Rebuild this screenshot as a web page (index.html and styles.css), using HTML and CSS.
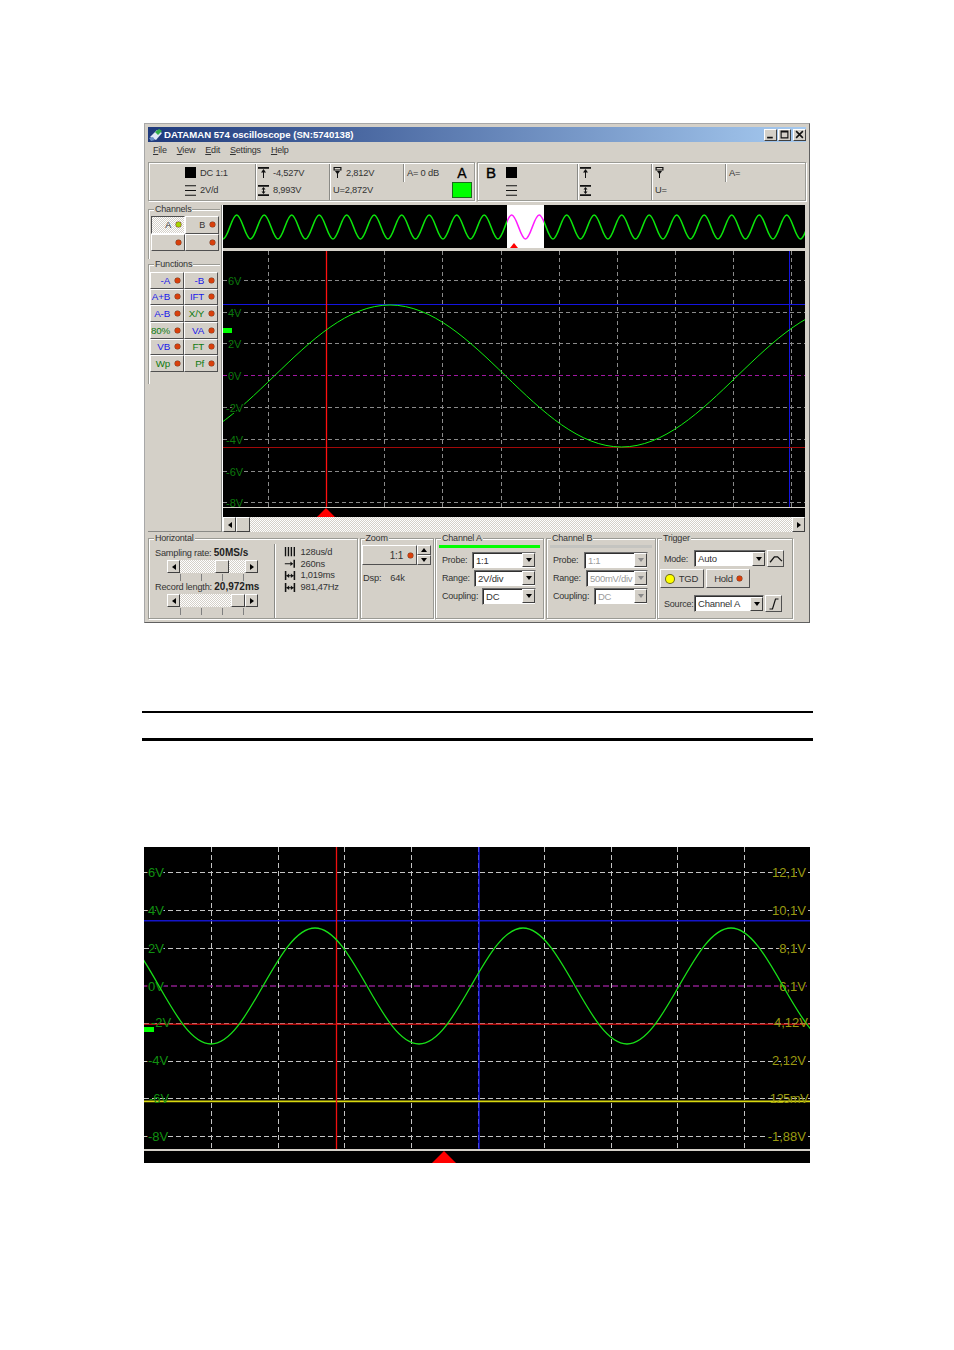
FILE: index.html
```html
<!DOCTYPE html>
<html lang="en">
<head>
<meta charset="utf-8">
<title>DATAMAN 574 oscilloscope</title>
<link rel="stylesheet" href="styles.css">
</head>
<body>
<svg class="sprite" aria-hidden="true">
  <symbol id="i-up" viewBox="0 0 11 11"><path d="M0 0h11v1.8H0z"/><path d="M5 3h1v8H5z"/><path d="M5.5 2L8 5.5H3z"/></symbol>
  <symbol id="i-both" viewBox="0 0 11 11"><path d="M0 0h11v1.8H0zM0 9.2h11V11H0z"/><path d="M5 3h1v5H5z"/><path d="M5.5 2L7.5 4.5h-4zM5.5 9L7.5 6.5h-4z"/></symbol>
  <symbol id="i-pin" viewBox="0 0 11 11"><path fill-rule="evenodd" d="M1.5 0h8v3.5h-8zM2.7 1.1v1.3h5.6V1.1z"/><path d="M5 6h1v5H5z"/><path d="M5.5 7.5L3 4h5z"/></symbol>
  <symbol id="i-lines" viewBox="0 0 11 11"><path d="M0 .3h11v1H0zM0 5h11v1H0zM0 9.7h11v1H0z"/></symbol>
  <symbol id="i-bars" viewBox="0 0 12 11"><path d="M0 0h1.6v11H0zM3.4 0H5v11H3.4zM6.8 0h1.6v11H6.8zM10.2 0h1.6v11h-1.6z"/></symbol>
  <symbol id="i-right" viewBox="0 0 12 11"><path d="M0 5h9v1H0z"/><path d="M9.5 5.5L6.5 3v5zM10 1h1.8v9H10z"/></symbol>
  <symbol id="i-span" viewBox="0 0 12 11"><path d="M0 0h1.8v11H0zM10.2 0H12v11h-1.8zM2 5h8v1H2z"/><path d="M2 5.5L5 3v5zM10 5.5L7 3v5z"/></symbol>
</svg>

<main class="window">
  <header class="titlebar">
    <svg class="appicon" viewBox="0 0 14 13"><path class="ico-w" d="M1 9l7-7 5 3-6 7z"/><path class="ico-g" d="M6 4l4-3 3 2-4 4z"/><path class="ico-b" d="M0 10l4-1 2 3-4 1z"/></svg>
    <span class="title-text">DATAMAN 574 oscilloscope (SN:5740138)</span>
    <div class="capbtns">
      <span class="capbtn"><svg viewBox="0 0 8 8"><path d="M1 6h5v1.5H1z"/></svg></span>
      <span class="capbtn"><svg viewBox="0 0 8 8"><path d="M.5.5h7v7h-7zM1.5 2.2v4.3h5V2.2z" fill-rule="evenodd"/></svg></span>
      <span class="capbtn capclose"><svg viewBox="0 0 8 8"><path d="M1 1l6 6M7 1L1 7" class="capx"/></svg></span>
    </div>
  </header>

  <nav class="menu">
    <span><u>F</u>ile</span><span><u>V</u>iew</span><span><u>E</u>dit</span><span><u>S</u>ettings</span><span><u>H</u>elp</span>
  </nav>

  <section class="toolbars">
    <div class="panel panel-a">
      <div class="pcol c-head">
        <div class="rd"><i class="sq"></i><span>DC 1:1</span></div>
        <div class="rd"><svg class="ic"><use href="#i-lines"/></svg><span>2V/d</span></div>
      </div>
      <div class="pcol div">
        <div class="rd"><svg class="ic"><use href="#i-up"/></svg><span>-4,527V</span></div>
        <div class="rd"><svg class="ic"><use href="#i-both"/></svg><span>8,993V</span></div>
      </div>
      <div class="pcol div">
        <div class="rd"><svg class="ic"><use href="#i-pin"/></svg><span class="sp3">2,812V</span></div>
        <div class="rd"><span>U=2,872V</span></div>
      </div>
      <div class="pcol c-db">
        <div class="rd div-short"><span>A= 0 dB</span></div>
        <div class="ch-badge"><b>A</b><i class="swatch"></i></div>
      </div>
    </div>
    <div class="panel panel-b">
      <div class="pcol c-headb">
        <div class="rd"><b class="big">B</b><i class="sq"></i></div>
        <div class="rd rd-ind"><svg class="ic"><use href="#i-lines"/></svg></div>
      </div>
      <div class="pcol div c-b2">
        <div class="rd"><svg class="ic"><use href="#i-up"/></svg></div>
        <div class="rd"><svg class="ic"><use href="#i-both"/></svg></div>
      </div>
      <div class="pcol div c-b3">
        <div class="rd"><svg class="ic"><use href="#i-pin"/></svg></div>
        <div class="rd"><span>U=</span></div>
      </div>
      <div class="pcol c-db">
        <div class="rd div-short"><span>A=</span></div>
      </div>
    </div>
  </section>

  <section class="work">
    <aside class="side">
      <fieldset class="grp side-grp">
        <legend>Channels</legend>
        <div class="btngrid">
          <button class="bt checked">A<i class="led on"></i></button>
          <button class="bt">B<i class="led"></i></button>
          <button class="bt"><i class="led"></i></button>
          <button class="bt"><i class="led"></i></button>
        </div>
      </fieldset>
      <fieldset class="grp side-grp fn-grp">
        <legend>Functions</legend>
        <div class="btngrid fn">
          <button class="bt blue">-A<i class="led"></i></button>
          <button class="bt blue">-B<i class="led"></i></button>
          <button class="bt blue">A+B<i class="led"></i></button>
          <button class="bt blue">IFT<i class="led"></i></button>
          <button class="bt blue">A-B<i class="led"></i></button>
          <button class="bt green">X/Y<i class="led"></i></button>
          <button class="bt green">80%<i class="led"></i></button>
          <button class="bt blue">VA<i class="led"></i></button>
          <button class="bt blue">VB<i class="led"></i></button>
          <button class="bt green">FT<i class="led"></i></button>
          <button class="bt green">Wp<i class="led"></i></button>
          <button class="bt green">Pf<i class="led"></i></button>
        </div>
      </fieldset>
    </aside>

    <div class="scopes">
      <svg class="mini" viewBox="223 205 582 43">
        <defs>
          <path id="minwave" d="M209.2 215c5 0 8.75 24 13.75 24c5 0 8.75-24 13.75-24c5 0 8.75 24 13.75 24c5 0 8.75-24 13.75-24c5 0 8.75 24 13.75 24c5 0 8.75-24 13.75-24c5 0 8.75 24 13.75 24c5 0 8.75-24 13.75-24c5 0 8.75 24 13.75 24c5 0 8.75-24 13.75-24c5 0 8.75 24 13.75 24c5 0 8.75-24 13.75-24c5 0 8.75 24 13.75 24c5 0 8.75-24 13.75-24c5 0 8.75 24 13.75 24c5 0 8.75-24 13.75-24c5 0 8.75 24 13.75 24c5 0 8.75-24 13.75-24c5 0 8.75 24 13.75 24c5 0 8.75-24 13.75-24c5 0 8.75 24 13.75 24c5 0 8.75-24 13.75-24c5 0 8.75 24 13.75 24c5 0 8.75-24 13.75-24c5 0 8.75 24 13.75 24c5 0 8.75-24 13.75-24c5 0 8.75 24 13.75 24c5 0 8.75-24 13.75-24c5 0 8.75 24 13.75 24c5 0 8.75-24 13.75-24c5 0 8.75 24 13.75 24c5 0 8.75-24 13.75-24c5 0 8.75 24 13.75 24c5 0 8.75-24 13.75-24c5 0 8.75 24 13.75 24c5 0 8.75-24 13.75-24c5 0 8.75 24 13.75 24c5 0 8.75-24 13.75-24c5 0 8.75 24 13.75 24c5 0 8.75-24 13.75-24c5 0 8.75 24 13.75 24c5 0 8.75-24 13.75-24c5 0 8.75 24 13.75 24c5 0 8.75-24 13.75-24"/>
        </defs>
        <rect class="blk" x="223" y="205" width="582" height="43"/>
        <use href="#minwave" class="w-mini"/>
        <rect class="wht" x="507" y="205" width="37" height="43"/>
        <svg x="507" y="205" width="37" height="43" viewBox="507 205 37 43"><use href="#minwave" class="w-mag"/></svg>
        <path class="redf" d="M514 243l4 5h-8z"/>
      </svg>

      <svg class="main-scope" viewBox="223 251 582 266" role="img">
        <rect class="blk" x="223" y="251" width="582" height="266"/>
        <path class="grid dim" d="M223 280.5H805M223 312.5H805M223 343.5H805M223 407.5H805M223 439.5H805M223 471.5H805M223 502.5H805"/>
        <path class="grid dim" d="M268.5 251V507M384.5 251V507M442.5 251V507M501.5 251V507M559.5 251V507M617.5 251V507M675.5 251V507M733.5 251V507M791.5 251V507"/>
        <path class="purple" d="M223 375.5H805"/>
        <path class="hblue" d="M223 304.5H805M789.5 251V507"/>
        <path class="hred" d="M223 447.5H805"/>
        <path class="vred" d="M326.5 251V507"/>
        <path class="wave" d="M-73 305c84.3 0 147.2 142 231.5 142c84.3 0 147.2-142 231.5-142c84.3 0 147.2 142 231.5 142c84.3 0 147.2-142 231.5-142"/>
        <g class="vl">
          <text x="228" y="284.5">6V</text><text x="228" y="316.5">4V</text><text x="228" y="347.5">2V</text><text x="228" y="379.5">0V</text>
          <text x="226" y="411.5">-2V</text><text x="226" y="443.5">-4V</text><text x="226" y="475.5">-6V</text><text x="226" y="506.5">-8V</text>
        </g>
        <rect class="lime" x="223" y="328" width="9" height="5"/>
        <rect class="blk" x="223" y="508" width="582" height="9"/>
        <path class="sep" d="M223 507.5H805"/>
        <path class="redf" d="M326 508l9 9h-18z"/>
      </svg>

      <div class="hscroll">
        <span class="sb sb-l"></span><span class="thumb"></span><span class="track"></span><span class="sb sb-r"></span>
      </div>
    </div>
  </section>

  <section class="bottom">
    <fieldset class="grp g-h">
      <legend>Horizontal</legend>
      <div class="h-inner">
        <div class="h-left">
          <div class="h-lab">Sampling rate: <b>50MS/s</b></div>
          <div class="slider"><span class="sb sb-l"></span><span class="strack"><span class="thumb t1"></span></span><span class="sb sb-r"></span></div>
          <div class="ticks"><i></i><i></i><i></i><i></i></div>
          <div class="h-lab">Record length: <b>20,972ms</b></div>
          <div class="slider"><span class="sb sb-l"></span><span class="strack"><span class="thumb t2"></span></span><span class="sb sb-r"></span></div>
          <div class="ticks"><i></i><i></i><i></i><i></i></div>
        </div>
        <div class="h-right">
          <div class="m"><svg class="ic2"><use href="#i-bars"/></svg><span>128us/d</span></div>
          <div class="m"><svg class="ic2"><use href="#i-right"/></svg><span>260ns</span></div>
          <div class="m"><svg class="ic2"><use href="#i-span"/></svg><span>1,019ms</span></div>
          <div class="m"><svg class="ic2"><use href="#i-span"/></svg><span>981,47Hz</span></div>
        </div>
      </div>
    </fieldset>

    <fieldset class="grp g-z">
      <legend>Zoom</legend>
      <div class="z-row">
        <button class="bt z-btn">1:1<i class="led"></i></button>
        <div class="spin"><span class="bt s-up"></span><span class="bt s-dn"></span></div>
      </div>
      <div class="dsp"><span>Dsp:</span><span>64k</span></div>
    </fieldset>

    <fieldset class="grp g-c">
      <legend>Channel A</legend>
      <div class="cbar"></div>
      <div class="crow"><span>Probe:</span><div class="combo w-p"><span>1:1</span><i class="arr"></i></div></div>
      <div class="crow"><span>Range:</span><div class="combo w-r"><span>2V/div</span><i class="arr"></i></div></div>
      <div class="crow"><span>Coupling:</span><div class="combo w-c"><span>DC</span><i class="arr"></i></div></div>
    </fieldset>

    <fieldset class="grp g-c g-cb">
      <legend>Channel B</legend>
      <div class="cbar off"></div>
      <div class="crow"><span>Probe:</span><div class="combo w-p dis"><span>1:1</span><i class="arr"></i></div></div>
      <div class="crow"><span>Range:</span><div class="combo w-r dis"><span>500mV/div</span><i class="arr"></i></div></div>
      <div class="crow"><span>Coupling:</span><div class="combo w-c dis"><span>DC</span><i class="arr"></i></div></div>
    </fieldset>

    <fieldset class="grp g-t">
      <legend>Trigger</legend>
      <div class="t-row">
        <span class="t-lab">Mode:</span>
        <div class="combo w-t"><span>Auto</span><i class="arr"></i></div>
        <button class="bt t-ic"><svg viewBox="0 0 13 10"><path class="tr-line" d="M1 8l4-5h3l4 4"/></svg></button>
      </div>
      <div class="t-btns">
        <button class="bt tgd"><i class="led y"></i>TGD</button>
        <button class="bt hold">Hold<i class="led"></i></button>
      </div>
      <div class="t-row src">
        <span class="t-lab">Source:</span>
        <div class="combo w-t2"><span>Channel A</span><i class="arr"></i></div>
        <button class="bt t-ic"><svg viewBox="0 0 13 12"><path class="tr-line" d="M2 11h3l3-10h3"/></svg></button>
      </div>
    </fieldset>
  </section>
</main>

<hr class="rule r1">
<hr class="rule r2">

<svg class="scope2" viewBox="144 847 666 316" role="img">
  <rect class="blk" x="144" y="847" width="666" height="316"/>
  <path class="grid bright" d="M144 872.5H810M144 910.5H810M144 948.5H810M144 1023.5H810M144 1061.5H810M144 1098.5H810M144 1136.5H810"/>
  <path class="grid bright" d="M211.5 847V1149M278.5 847V1149M344.5 847V1149M411.5 847V1149M478.5 847V1149M544.5 847V1149M611.5 847V1149M677.5 847V1149M744.5 847V1149"/>
  <path class="purple2" d="M144 986H810"/>
  <g class="vl2">
    <text x="148" y="877">6V</text><text x="148" y="915">4V</text><text x="148" y="953">2V</text><text x="148" y="991">0V</text>
    <text x="148" y="1065">-4V</text><text x="148" y="1141">-8V</text>
  </g>
  <g class="vr2">
    <text x="806" y="877">12,1V</text><text x="806" y="915">10,1V</text><text x="806" y="953">8,1V</text><text x="806" y="991">6,1V</text>
    <text x="806" y="1065">2,12V</text><text x="806" y="1141">-1,88V</text>
  </g>
  <path class="b2" d="M144 920.7H810"/>
  <path class="v-b2" d="M479 847V1149"/>
  <path class="r2l" d="M144 1024.3H810"/>
  <path class="y2" d="M144 1101.3H810"/>
  <path class="v-r2" d="M336.5 847V1149"/>
  <path class="wave2" d="M107 928c37.9 0 66.1 116 104 116c37.9 0 66.1-116 104-116c37.9 0 66.1 116 104 116c37.9 0 66.1-116 104-116c37.9 0 66.1 116 104 116c37.9 0 66.1-116 104-116c37.9 0 66.1 116 104 116c37.9 0 66.1-116 104-116"/>
  <g class="vl2 over">
    <text x="151" y="1027">-2V</text><text x="149" y="1103">-6V</text>
  </g>
  <g class="vr2 over">
    <text x="808" y="1027">4,12V</text><text x="808" y="1103" class="tight">125mV</text>
  </g>
  <rect class="lime" x="144" y="1027" width="10" height="5"/>
  <rect class="sep2" x="144" y="1149" width="666" height="2"/>
  <path class="redf" d="M444 1151l12 12h-24z"/>
</svg>
</body>
</html>
```

FILE: styles.css
```css
* { box-sizing: border-box; }
html, body { margin: 0; background: #fff; }
body {
  padding: 123px 0 0 144px;
  width: 954px;
  height: 1350px;
  overflow: hidden;
  font-family: "Liberation Sans", Arial, sans-serif;
  font-size: 9px;
  letter-spacing: -0.2px;
  color: #333;
}
.sprite { display: none; }

/* window */
.window {
  width: 666px;
  height: 500px;
  padding: 3px 3px 0;
  background: #d4d0c8;
  border: 1px solid #a8a8a8;
  border-right-color: #606060;
  border-bottom-color: #606060;
}
.titlebar {
  height: 15px;
  display: flex;
  align-items: center;
  background: linear-gradient(90deg, #1f3a7c 0%, #a6caf0 100%);
  padding: 0 0 0 1px;
}
.appicon { width: 14px; height: 13px; flex: none; }
.ico-w { fill: #dfe8f5; }
.ico-g { fill: #34b04a; }
.ico-b { fill: #6a90c8; }
.title-text {
  margin-left: 1px;
  font-weight: 700;
  font-size: 9.6px;
  letter-spacing: 0;
  color: #fff;
  white-space: nowrap;
}
.capbtns { margin-left: auto; display: flex; gap: 1px; }
.capbtn {
  width: 13px;
  height: 12px;
  background: #d4d0c8;
  border: 1px solid;
  border-color: #fff #404040 #404040 #fff;
  display: flex;
  align-items: center;
  justify-content: center;
}
.capbtn svg { width: 9px; height: 9px; fill: #111; }
.capclose { margin-left: 1px; }
.capx { stroke: #111; stroke-width: 1.4; fill: none; }

.menu {
  height: 16px;
  display: flex;
  align-items: center;
  gap: 10px;
  padding-left: 5px;
}
.menu span { white-space: nowrap; }

/* top readouts */
.toolbars { display: flex; gap: 2px; height: 39px; margin-top: 4px; }
.panel {
  display: flex;
  border: 1px solid #9a9a94;
  box-shadow: inset 1px 1px #fff, 1px 1px #fff;
  padding-top: 1px;
}
.panel-a { width: 327px; }
.panel-b { width: 329px; }
.pcol { display: flex; flex-direction: column; }
.pcol.div { border-left: 1px solid #8a8a86; box-shadow: inset 1px 0 #fff; width: 74px; padding-left: 2px; }
.c-head { width: 106px; padding-left: 36px; }
.c-db { flex: 1; display: flex; flex-direction: row; }
.rd { height: 17.5px; display: flex; align-items: center; white-space: nowrap; font-size: 9.3px; }
.rd > span { margin-left: 4px; }
.pcol.div .rd > span:only-child { margin-left: 1px; }
.rd > .sp3 { margin-left: 3px; }
.sq { width: 11px; height: 11px; background: #000; display: block; flex: none; }
.ic { width: 11px; height: 11px; flex: none; fill: #111; }
.div-short { border-left: 1px solid #8a8a86; box-shadow: inset 1px 0 #fff; padding-left: 3px; }
.rd.div-short > span { margin-left: 0; }
.ch-badge { margin: 1px 2px 0 auto; display: flex; flex-direction: column; align-items: center; width: 20px; }
.ch-badge b { font-size: 14px; line-height: 17px; font-weight: 400; color: #000; letter-spacing: 0; -webkit-text-stroke: .3px #000; }
.swatch { width: 20px; height: 16px; background: #00ff00; border: 1px solid #1d6a1d; display: block; }
.c-headb { width: 99px; padding-left: 8px; }
.big { font-size: 15px; line-height: 17px; font-weight: 400; letter-spacing: 0; color: #000; width: 20px; -webkit-text-stroke: .4px #000; }
.rd-ind { padding-left: 20px; }

/* main area */
.work { display: flex; height: 327px; margin-top: 4px; }
.side {
  width: 75px;
  flex: none;
  border-right: 1px solid #fff;
  box-shadow: inset -1px 0 #8a8a86;
  border-bottom: 1px solid #8a8a86;
  padding-right: 3px;
}
.grp {
  margin: 0;
  padding: 0;
  min-width: 0;
  border: 1px solid #9a9a94;
  box-shadow: inset 1px 1px #fff, 1px 1px #fff;
}
.grp legend {
  margin-left: 5px;
  padding: 0 1px;
  font-size: 9px;
  line-height: 11px;
  height: 11px;
  background: #d4d0c8;
}
.side-grp { width: 72px; border-right: 0; border-bottom: 0; box-shadow: inset 1px 1px #fff; height: 55px; margin-top: -1px; }
.side-grp .btngrid { margin-top: 1px; grid-auto-rows: 17.5px; }
.fn-grp { margin-top: 0; height: 125px; }
.btngrid { display: grid; grid-template-columns: 34px 34px; padding-left: 2px; }
.side-grp .btngrid.fn { grid-auto-rows: 16.67px; padding-left: 1px; margin-top: 2px; }
.bt {
  margin: 0;
  padding: 0 3px 0 0;
  font: inherit;
  letter-spacing: inherit;
  color: #333;
  background: #d4d0c8;
  border: 1px solid;
  border-color: #fff #505050 #505050 #fff;
  display: flex;
  align-items: center;
  justify-content: flex-end;
  gap: 5px;
}
.bt.blue { color: #1a1ae8; font-size: 9.8px; }
.bt.green { color: #0f7a0f; font-size: 9.8px; }
.checked {
  background: repeating-conic-gradient(#fff 0 25%, #d4d0c8 0 50%) 0 0 / 2px 2px;
  border-color: #505050 #fff #fff #505050;
}
.led {
  width: 5px;
  height: 5px;
  border-radius: 50%;
  background: #d8400c;
  box-shadow: 0 0 0 .5px #7a3a20;
  flex: none;
  display: block;
}
.led.on { background: #a4d400; }
.led.y { width: 8px; height: 8px; background: #ffff00; box-shadow: 0 0 0 1px #6a6a10; }

.scopes { flex: 1; display: flex; flex-direction: column; }
.mini { width: 582px; height: 43px; display: block; flex: none; }
.main-scope {
  width: 582px;
  height: 266px;
  display: block;
  flex: none;
  margin-top: 3px;
}
.blk { fill: #000; }
.wht { fill: #fff; }
.redf { fill: #f00; }
.lime { fill: #00ff00; }
.w-mini { fill: none; stroke: #0be40b; stroke-width: 1.6; }
.w-mag { fill: none; stroke: #ff1cff; stroke-width: 1.6; }
.grid { fill: none; stroke-width: 1; shape-rendering: crispEdges; }
.grid.dim { stroke: #8a8a8a; stroke-dasharray: 4 3; }
.grid.bright { stroke: #c4c4c4; stroke-dasharray: 5 3; }
.purple { stroke: #a018a0; stroke-width: 1; stroke-dasharray: 4 3; shape-rendering: crispEdges; }
.hblue { stroke: #1414e0; stroke-width: 1; fill: none; shape-rendering: crispEdges; }
.hred { stroke: #a00808; stroke-width: 1; shape-rendering: crispEdges; }
.vred { stroke: #ff1010; stroke-width: 1.3; }
.wave { fill: none; stroke: #10f010; stroke-width: 1; }
.vl text { font-size: 11px; letter-spacing: 0; fill: #0c7a0c; stroke: #000; stroke-width: 2px; paint-order: stroke; }
.sep { stroke: #d4d0c8; stroke-width: 1; shape-rendering: crispEdges; }

.hscroll { display: flex; height: 15px; align-items: stretch; width: 582px; }
.track, .strack {
  flex: 1;
  background: repeating-conic-gradient(#fff 0 25%, #d4d0c8 0 50%) 0 0 / 2px 2px;
}
.sb, .thumb {
  width: 13px;
  flex: none;
  background: #d4d0c8;
  border: 1px solid;
  border-color: #fff #404040 #404040 #fff;
  display: flex;
  align-items: center;
  justify-content: center;
}
.thumb { width: 14px; }
.sb::after { content: ""; width: 0; height: 0; border-style: solid; border-color: transparent; }
.sb-l::after { border-width: 3.5px 4px 3.5px 0; border-right-color: #000; }
.sb-r::after { border-width: 3.5px 0 3.5px 4px; border-left-color: #000; }

/* bottom groups */
.bottom { display: flex; height: 89px; padding-top: 1px; }
.g-h { width: 210px; height: 86px; margin-right: 2px; }
.g-z { width: 74px; height: 86px; margin-right: 1px; }
.g-c { width: 109px; height: 86px; margin-right: 2px; padding: 1px 3px 0; }
.g-cb { width: 110px; margin-right: 1px; }
.g-t { width: 136px; height: 86px; padding: 6px 5px 0 2px; }
.g-z legend { margin-left: 3.5px; }
.g-c legend { margin-left: 2px; }
.g-cb legend { margin-left: 1px; }
.g-t legend { margin-left: 2px; }

.h-inner { display: flex; height: 74px; }
.h-left { width: 125px; padding-left: 6px; padding-top: 3px; }
.h-lab { height: 11px; line-height: 11px; white-space: nowrap; font-size: 9.2px; }
.h-lab b { font-size: 10px; letter-spacing: 0; color: #222; }
.slider { display: flex; width: 91px; height: 13px; margin: 2px 0 0 12px; }
.strack { display: flex; }
.slider .thumb.t1 { margin-left: 35px; }
.slider .thumb.t2 { margin-left: 51px; }
.ticks { display: flex; gap: 20px; height: 7px; margin: 1px 0 0 25px; }
.ticks i { width: 1px; background: #808080; display: block; }
.h-right { flex: 1; border-left: 1px solid #8a8a86; box-shadow: inset 1px 0 #fff; padding: 2px 0 0 9px; }
.m { height: 11.8px; display: flex; align-items: center; gap: 4.5px; font-size: 9.3px; }
.ic2 { width: 12px; height: 9.5px; fill: #111; flex: none; }

.z-row { display: flex; padding: 1px 0 0 1px; }
.z-btn { width: 55px; height: 20px; padding-right: 3px; font-size: 10px; gap: 5px; }
.spin { width: 14px; height: 20px; display: flex; flex-direction: column; }
.spin .bt { height: 10px; justify-content: center; padding: 0; }
.spin .bt::after { content: ""; width: 0; height: 0; border-style: solid; border-color: transparent; }
.s-up::after { border-width: 0 3.5px 4px; border-bottom-color: #000 !important; }
.s-dn::after { border-width: 4px 3.5px 0; border-top-color: #000 !important; }
.dsp { display: flex; gap: 9px; padding: 8px 0 0 2px; font-size: 9.3px; line-height: 11px; }

.cbar { height: 3px; background: #00ff00; margin: 0 0 3px; }
.cbar.off { background: #c4c4c0; }
.crow { display: flex; align-items: center; justify-content: space-between; height: 18px; padding: 0 4px 0 3px; font-size: 9px; white-space: nowrap; }
.combo {
  height: 17px;
  background: #fff;
  border: 1px solid;
  border-color: #6a6a6a #d4d0c8 #d4d0c8 #6a6a6a;
  box-shadow: inset 1px 1px #303030;
  display: flex;
  align-items: center;
  padding-left: 3px;
  font-size: 9.5px;
  overflow: hidden;
}
.combo span { flex: 1; white-space: nowrap; }
.arr {
  flex: none;
  width: 13px;
  height: 14px;
  background: #d4d0c8;
  border: 1px solid;
  border-color: #fff #404040 #404040 #fff;
  display: flex;
  align-items: center;
  justify-content: center;
}
.arr::after { content: ""; border-style: solid; border-width: 4px 3.5px 0; border-color: #000 transparent transparent; }
.w-p { width: 64px; }
.w-r { width: 62px; }
.w-c { width: 54px; }
.dis { background: #fff; color: #9a9a9a; letter-spacing: -.3px; }
.dis .arr::after { border-top-color: #8a8a8a; }

.t-row { display: flex; align-items: center; height: 17px; }
.t-lab { width: 34px; padding-left: 4px; font-size: 9px; flex: none; }
.w-t { width: 72px; }
.w-t2 { width: 70px; }
.t-ic { width: 17px; height: 17px; margin-left: 1px; padding: 0; justify-content: center; }
.t-ic svg { width: 14px; height: 12px; }
.tr-line { fill: none; stroke: #111; stroke-width: 1.2; }
.t-btns { display: flex; gap: 2px; margin: 2px 0 7px; }
.tgd { width: 44px; height: 19px; justify-content: center; gap: 5px; padding: 0; font-size: 9.5px; }
.hold { width: 44px; height: 19px; justify-content: center; gap: 4px; padding: 0; font-size: 9.5px; }

/* page rules and second capture */
.rule { border: 0; margin: 0 0 0 -2px; width: 671px; background: #000; }
.r1 { height: 2px; margin-top: 88px; }
.r2 { height: 3px; margin-top: 25px; }
.scope2 { display: block; width: 666px; height: 316px; margin-top: 106px; }
.purple2 { stroke: #8a1e8a; stroke-width: 1.6; stroke-dasharray: 6 3; }
.b2 { stroke: #1414c8; stroke-width: 1.6; }
.v-b2 { stroke: #1414f0; stroke-width: 1.4; }
.r2l { stroke: #b40a0a; stroke-width: 1.6; }
.y2 { stroke: #d8d810; stroke-width: 1.8; }
.v-r2 { stroke: #f01010; stroke-width: 1.3; }
.wave2 { fill: none; stroke: #18e018; stroke-width: 1.3; }
.vl2 text { font-size: 13px; letter-spacing: 0; fill: #109010; stroke: #000; stroke-width: 2.5px; paint-order: stroke; }
.vr2 text { font-size: 13px; letter-spacing: 0; fill: #9a9a10; text-anchor: end; stroke: #000; stroke-width: 2.5px; paint-order: stroke; }
.over text { stroke: none; }
.vr2 .tight { letter-spacing: -.6px; }
.sep2 { fill: #d4d0c8; }
```
